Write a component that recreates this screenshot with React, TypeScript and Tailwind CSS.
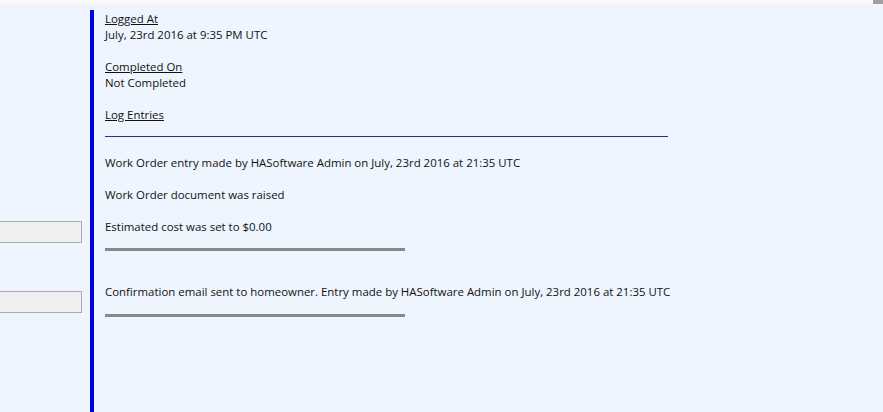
export default function App() {
  const font = { fontFamily: '"Open Sans", "Noto Sans", sans-serif' }
  return (
    <div className="w-[883px] h-[412px] overflow-hidden bg-[#eef5fe] text-[#111] text-[11.45px] leading-[16px]" style={font}>
      {/* top strip */}
      <div className="h-[4px] bg-[#f9f9f9] flex justify-end">
        <div className="w-[10px] h-[4px] bg-[#a0a0a0]" />
      </div>
      <div className="flex mt-[6px] h-[402px]">
        {/* left form column */}
        <div className="w-[90px] shrink-0 pt-[211px]">
          <div className="-ml-[4px] w-[86px] h-[22px] border border-[#ababab] bg-[#f0f0f0]" />
          <div className="-ml-[4px] mt-[48px] w-[86px] h-[22px] border border-[#ababab] bg-[#f0f0f0]" />
        </div>
        {/* details */}
        <div className="border-l-[4px] border-[#0000e0] pl-[11px] flex-1">
          <div className="pt-[1px]">
            <p className="underline">Logged At</p>
            <p>July, 23rd 2016 at 9:35 PM UTC</p>
            <p className="underline mt-[16px]">Completed On</p>
            <p>Not Completed</p>
            <p className="underline mt-[16px]">Log Entries</p>
          </div>
          <div className="mt-[13px] w-[563px] h-[1px] bg-[#2b2b9c]" />
          <p className="mt-[18px]">Work Order entry made by HASoftware Admin on July, 23rd 2016 at 21:35 UTC</p>
          <p className="mt-[16px]">Work Order document was raised</p>
          <p className="mt-[16px]">Estimated cost was set to $0.00</p>
          <div className="mt-[13px] w-[300px] h-[3px] bg-[#888888]" />
          <p className="mt-[33px]">Confirmation email sent to homeowner. Entry made by HASoftware Admin on July, 23rd 2016 at 21:35 UTC</p>
          <div className="mt-[14px] w-[300px] h-[3px] bg-[#888888]" />
        </div>
      </div>
    </div>
  )
}
